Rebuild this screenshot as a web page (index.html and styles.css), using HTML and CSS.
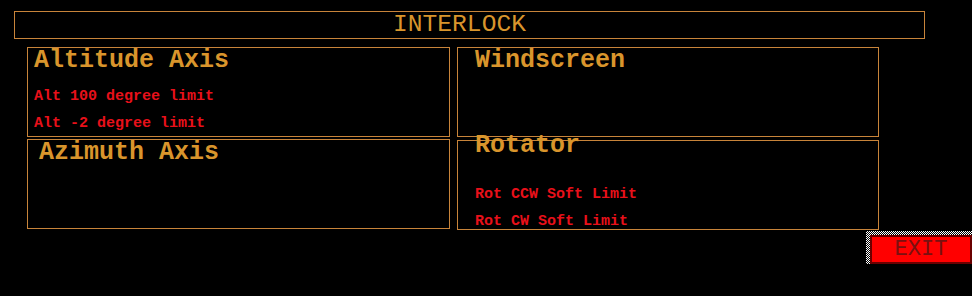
FILE: index.html
```html
<!DOCTYPE html>
<html lang="en">
<head>
    <meta charset="UTF-8">
    <title>Interlock</title>
    <link rel="stylesheet" href="styles.css">
</head>
<body>

    <!-- Title bar -->
    <header class="titlebar">INTERLOCK</header>

    <!-- Interlock panels -->
    <main class="panels">
        <div class="column">
            <section class="panel panel-alt">
                <h2>Altitude Axis</h2>
                <p class="fault">Alt 100 degree limit</p>
                <p class="fault">Alt -2 degree limit</p>
            </section>
            <section class="panel panel-az">
                <h2>Azimuth Axis</h2>
            </section>
        </div>
        <div class="column column-right">
            <section class="panel panel-wind">
                <h2>Windscreen</h2>
            </section>
            <section class="panel panel-rot">
                <h2>Rotator</h2>
                <p class="fault">Rot CCW Soft Limit</p>
                <p class="fault">Rot CW Soft Limit</p>
            </section>
        </div>
    </main>

    <!-- Exit -->
    <div class="actions">
        <span class="focus">
            <button class="exit">EXIT</button>
        </span>
    </div>

</body>
</html>
```

FILE: styles.css
```css
body {
    margin: 0;
    background: #000;
    font-family: "Liberation Mono", "Courier New", monospace;
    color: #d9952c;
    width: 972px;
    height: 296px;
    overflow: hidden;
}
.titlebar {
    margin: 11px 0 0 14px;
    width: 911px;
    height: 28px;
    box-sizing: border-box;
    border: 1px solid #c8843a;
    padding-right: 20px;
    text-align: center;
    font-size: 24.6px;
    line-height: 26px;
}
.panels {
    display: flex;
    gap: 7px;
    margin: 8px 0 0 27px;
}
.column {
    display: flex;
    flex-direction: column;
    gap: 2px;
    width: 423px;
}
.column-right {
    width: 422px;
    gap: 3px;
}
.panel {
    height: 90px;
    box-sizing: border-box;
    border: 1px solid #c8843a;
    padding: 0 0 0 6px;
}
.panel h2 {
    margin: 0;
    font-size: 25px;
    font-weight: bold;
    line-height: 25px;
}
.panel-az { padding-left: 11px; }
.panel-wind { padding-left: 17px; }
.panel-rot { padding-left: 17px; }
.fault {
    margin: 0;
    color: #e8101a;
    font-size: 15px;
    font-weight: bold;
    line-height: 27px;
}
.panel-alt h2 { margin-bottom: 10px; }
.panel-rot h2 {
    margin-top: -8px;
    margin-bottom: 23px;
}
.actions {
    display: flex;
    justify-content: flex-end;
    margin-top: 1px;
}
.focus {
    display: block;
    padding: 4px 0 0 4px;
    background: repeating-conic-gradient(#fff 0 25%, #000 0 50%) 0 0 / 2px 2px;
}
.exit {
    display: block;
    width: 102px;
    height: 29px;
    box-sizing: border-box;
    margin: 0;
    border: 2px solid #6a0000;
    background: #ff0000;
    color: #7a1010;
    font-family: "Liberation Mono", "Courier New", monospace;
    font-size: 22px;
    line-height: 23px;
    padding: 0;
    text-align: center;
}
```
